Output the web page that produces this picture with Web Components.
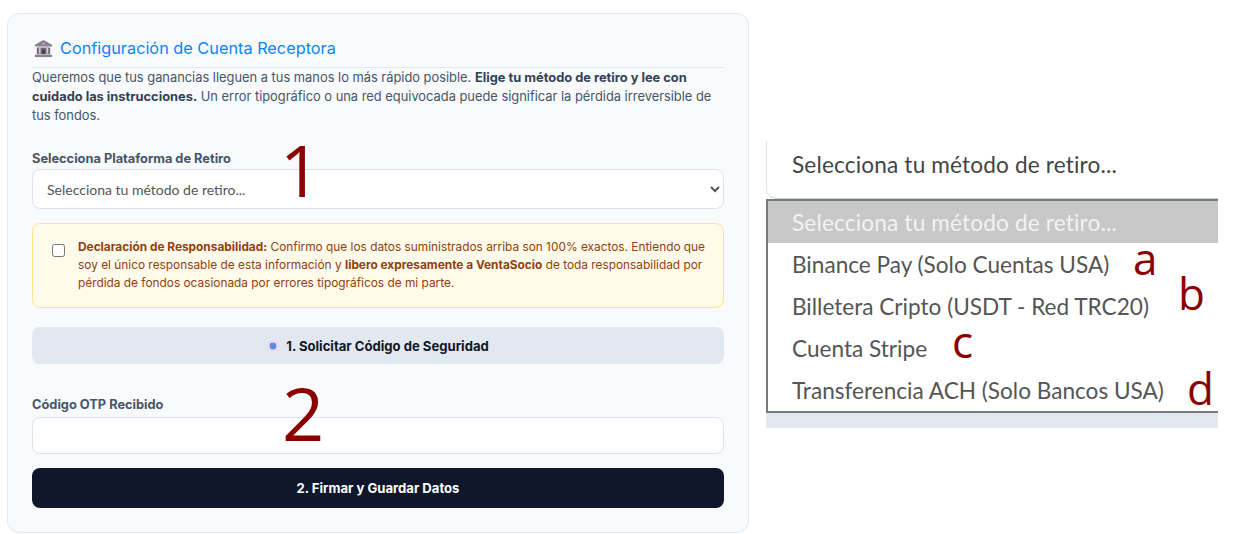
<!DOCTYPE html>
<html lang="es">
<head>
<meta charset="utf-8">
<title>Cuenta Receptora</title>
<style>
  html, body { margin: 0; background: #fff; }
  body { width: 1242px; height: 534px; overflow: hidden; font-family: Inter, "Liberation Sans", sans-serif; }
  .page { display: flex; align-items: flex-start; padding: 13px 0 0 7px; }
</style>
</head>
<body>
<div class="page">
  <vs-card heading="Configuración de Cuenta Receptora">
    <p-intro>Queremos que tus ganancias lleguen a tus manos lo más rápido posible. <b>Elige tu método de retiro y lee con cuidado las instrucciones.</b> Un error tipográfico o una red equivocada puede significar la pérdida irreversible de tus fondos.</p-intro>
    <vs-field label="Selecciona Plataforma de Retiro" kind="select" gap="26" labelgap="3"></vs-field>
    <vs-alert><b>Declaración de Responsabilidad:</b> Confirmo que los datos suministrados arriba son 100% exactos. Entiendo que soy el único responsable de esta información y <b>libero expresamente a VentaSocio</b> de toda responsabilidad por pérdida de fondos ocasionada por errores tipográficos de mi parte.</vs-alert>
    <vs-button variant="light" icon>1. Solicitar Código de Seguridad</vs-button>
    <vs-field label="Código OTP Recibido" kind="input" gap="33" labelgap="5"></vs-field>
    <vs-button variant="dark">2. Firmar y Guardar Datos</vs-button>
    <vs-mark x="272" y="113" size="71">1</vs-mark>
    <vs-mark x="274" y="355" size="74">2</vs-mark>
  </vs-card>
  <vs-options>
    <vs-mark x="367" y="91" size="44">a</vs-mark>
    <vs-mark x="412" y="126" size="44">b</vs-mark>
    <vs-mark x="186" y="174" size="44">c</vs-mark>
    <vs-mark x="421" y="221" size="44">d</vs-mark>
  </vs-options>
</div>
<script>
const SELECT_TEXT = 'Selecciona tu método de retiro...';

class VsCard extends HTMLElement {
  connectedCallback() {
    this.attachShadow({ mode: 'open' });
    this.shadowRoot.innerHTML = `
      <style>
        :host {
          display: block; position: relative; box-sizing: border-box;
          width: 742px; height: 520px; padding: 22px 24px 0;
          background: #f8fafc; border: 1px solid #e2e8f0; border-radius: 12px;
        }
        h2 {
          display: flex; align-items: center; gap: 7px; margin: 0; padding: 0 0 7px 2px;
          font: 400 16.3px/24px Inter, sans-serif; color: #0d84ff;
          border-bottom: 1px solid #e2e8f0;
        }
        svg { width: 19px; height: 19px; flex: none; }
      </style>
      <h2>
        <svg viewBox="0 0 20 20">
          <path fill="#8a7f8e" d="M10 1 19 6v2H1V6z"/>
          <circle cx="10" cy="5" r="1.3" fill="#b9a6d0"/>
          <path fill="#6f6672" d="M3 9h14v7H3z"/>
          <path fill="#cfc8d2" d="M5 9.5h2v6H5zM13 9.5h2v6h-2z"/>
          <path fill="#4a434d" d="M8.5 11h3v5h-3z"/>
          <path fill="#8a7f8e" d="M1 16.5h18V19H1z"/>
        </svg>
        <span></span>
      </h2>
      <slot></slot>`;
    this.shadowRoot.querySelector('span').textContent = this.getAttribute('heading');
  }
}

class PIntro extends HTMLElement {
  connectedCallback() {
    this.attachShadow({ mode: 'open' });
    this.shadowRoot.innerHTML = `
      <style>
        :host {
          display: block;
          font: 400 12.86px/19px Inter, sans-serif; color: #475569;
        }
        ::slotted(b) { font-weight: 700; color: #334155; }
      </style>
      <slot></slot>`;
  }
}

class VsField extends HTMLElement {
  connectedCallback() {
    const kind = this.getAttribute('kind');
    this.attachShadow({ mode: 'open' });
    this.shadowRoot.innerHTML = `
      <style>
        :host { display: block; margin-top: ${this.getAttribute('gap')}px; }
        label { display: block; font: 700 12.8px/15px Inter, sans-serif; color: #475569; margin-bottom: ${this.getAttribute('labelgap')}px; }
        select, input {
          display: block; box-sizing: border-box; width: 692px; margin: 0;
          background: #fff; border: 1px solid #dbe3ef; border-radius: 8px; outline: none;
        }
        select { height: 40px; padding: 0 10px; font: 400 14px Lato, sans-serif; color: #555; }
        input { height: 37px; }
      </style>
      <label></label>
      ${kind === 'select' ? `<select><option>${SELECT_TEXT}</option></select>` : '<input type="text">'}`;
    this.shadowRoot.querySelector('label').textContent = this.getAttribute('label');
  }
}

class VsAlert extends HTMLElement {
  connectedCallback() {
    this.attachShadow({ mode: 'open' });
    this.shadowRoot.innerHTML = `
      <style>
        :host {
          display: flex; gap: 13px; box-sizing: border-box; height: 85px; margin-top: 14px; padding: 14px 12px 14px 19px;
          background: #fffbeb; border: 1px solid #fde68a; border-radius: 8px;
          font: 400 11.87px/18px Inter, sans-serif; color: #92400e;
        }
        input { flex: none; width: 13px; height: 13px; margin: 6px 0 0; }
        ::slotted(b) { font-weight: 700; }
      </style>
      <input type="checkbox">
      <div><slot></slot></div>`;
  }
}

class VsButton extends HTMLElement {
  connectedCallback() {
    const dark = this.getAttribute('variant') === 'dark';
    this.attachShadow({ mode: 'open' });
    this.shadowRoot.innerHTML = `
      <style>
        :host {
          display: flex; align-items: center; justify-content: center; gap: 7px; box-sizing: border-box;
          height: ${dark ? 40 : 37}px; margin-top: ${dark ? 14 : 19}px; border-radius: 8px;
          background: ${dark ? '#0f172a' : '#e2e8f0'}; color: ${dark ? '#fff' : '#0f172a'};
          font: 700 13.1px/16px Inter, sans-serif;
        }
        svg { width: 12px; height: 10px; }
      </style>
      ${this.hasAttribute('icon') ? `<svg viewBox="0 0 12 10">
        <rect width="12" height="10" fill="#e9ddf6"/>
        <circle cx="6" cy="5" r="3.4" fill="#5f8bdc"/>
      </svg>` : ''}
      <slot></slot>`;
  }
}

class VsOptions extends HTMLElement {
  connectedCallback() {
    const rows = ['Binance Pay (Solo Cuentas USA)', 'Billetera Cripto (USDT - Red TRC20)', 'Cuenta Stripe', 'Transferencia ACH (Solo Bancos USA)'];
    this.attachShadow({ mode: 'open' });
    this.shadowRoot.innerHTML = `
      <style>
        :host {
          display: block; position: relative; flex: none; box-sizing: border-box;
          width: 452px; margin: 128px 0 0 17px;
          font: 400 22.6px/44px Lato, sans-serif; color: #555;
        }
        .closed {
          box-sizing: border-box; height: 58px; padding: 2px 0 0 25px; color: #444; letter-spacing: .16px;
          border-left: 1px solid #dbe3ef; border-bottom: 1px solid #c5d0e0; border-bottom-left-radius: 10px;
        }
        .list { border: solid #7a7a7a; border-width: 2px 0 2px 2px; }
        .row { height: 42px; padding-left: 24px; }
        .row.on { background: #c8c8c8; color: #f2f2f2; letter-spacing: .16px; }
        .foot { height: 15px; background: #e2e8f0; }
      </style>
      <div class="closed">${SELECT_TEXT}</div>
      <div class="list">
        <div class="row on">${SELECT_TEXT}</div>
        ${rows.map(r => `<div class="row">${r}</div>`).join('')}
      </div>
      <div class="foot"></div>
      <slot></slot>`;
  }
}

// red hand-written annotations that lie over the screenshot
class VsMark extends HTMLElement {
  connectedCallback() {
    this.attachShadow({ mode: 'open' });
    this.shadowRoot.innerHTML = `
      <style>
        :host {
          position: absolute; left: ${this.getAttribute('x')}px; top: ${this.getAttribute('y')}px;
          font: 400 ${this.getAttribute('size')}px/1.2 "Open Sans", sans-serif; color: #8b0000;
        }
      </style>
      <slot></slot>`;
  }
}

customElements.define('vs-card', VsCard);
customElements.define('p-intro', PIntro);
customElements.define('vs-field', VsField);
customElements.define('vs-alert', VsAlert);
customElements.define('vs-button', VsButton);
customElements.define('vs-options', VsOptions);
customElements.define('vs-mark', VsMark);
</script>
</body>
</html>
